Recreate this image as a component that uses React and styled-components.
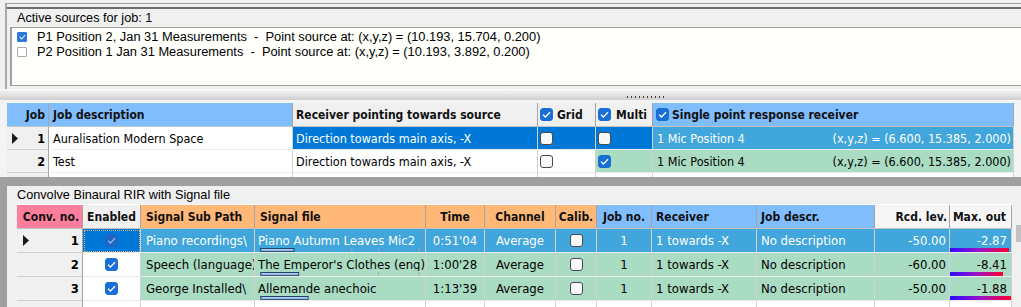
import React from "react";
import styled, { createGlobalStyle, css } from "styled-components";

const GRID_FONT = `"DejaVu Sans Condensed", "Liberation Sans", Arial, sans-serif`;
const UI_FONT = `"Liberation Sans", Arial, sans-serif`;

const C = {
  face: "#f0f0f0",
  sel: "#0078d7",
  selLight: "#41a6db",
  green: "#aadcc3",
  hdrBlue: "#80bdfd",
  hdrOrange: "#ffb877",
  hdrPink: "#fc7e9c",
  hdrWhite: "#f6f6f6",
  white: "#ffffff",
};

const GlobalStyle = createGlobalStyle`
  *, *::before, *::after { box-sizing: border-box; }
  html, body { margin: 0; padding: 0; }
  body { background: #f0f0f0; font-family: ${UI_FONT}; overflow: hidden; }
`;

const Page = styled.div`
  width: 1021px;
  height: 307px;
  overflow: hidden;
  background: #f0f0f0;
  display: flex;
  flex-direction: column;
`;

/* ---------- Active sources ---------- */
const SourcesFrame = styled.div`
  flex: none;
  margin: 3px 0 0 5px;
  height: 86px;
  border-top: 1px solid #a0a0a0;
  border-left: 2px solid #a9a9a9;
  padding-top: 3px;
`;

const SourcesGroup = styled.div`
  height: 100%;
  border-top: 2px solid #6d6d6d;
  display: flex;
  flex-direction: column;
`;

const GroupTitle = styled.div`
  height: 18px;
  line-height: 18px;
  padding-left: 10px;
  font-size: 12.7px;
  color: #000;
`;

const SourceList = styled.div`
  margin-left: 3px;
  height: 59px;
  background: #fffffb;
  border-top: 1px solid #a0a0a0;
  border-left: 2px solid #a0a0a0;
  border-bottom: 1px solid #a0a0a0;
  padding: 1px 0 0 5px;
`;

const SourceItem = styled.div`
  height: 15px;
  display: flex;
  align-items: center;
  gap: 10px;
  font-size: 12.85px;
  white-space: pre;
  color: #000;
`;

const SmallBox = styled.span`
  width: 10px;
  height: 10px;
  flex: none;
  display: inline-flex;
  align-items: center;
  justify-content: center;
  border-radius: 1px;
  border: 1px solid ${(p) => (p.$checked ? "#2b79d8" : "#ababab")};
  background: ${(p) => (p.$checked ? "#2b79d8" : "#fff")};
`;

/* ---------- Splitter ---------- */
const Splitter = styled.div`
  flex: none;
  height: 11px;
  border-top: 1px solid #fbfbfb;
  background: linear-gradient(#f4f4f4, #cfcfcf);
  padding: 6px 0 0 627px;
`;

const Grip = styled.div`
  width: 37px;
  height: 2px;
  background: repeating-linear-gradient(90deg, #3a3a3a 0 1px, transparent 1px 4px);
`;

/* ---------- Grids ---------- */
const JobArea = styled.div`
  flex: none;
  height: 77px;
  padding: 3px 0 0 7px;
  overflow: hidden;
  background: #f4f4f4;
`;

const Workspace = styled.div`
  flex: 1;
  min-height: 0;
  background: #a0a0a0;
  padding: 9px 0 0 7px;
  display: flex;
`;

const ConvolvePanel = styled.div`
  flex: 1;
  background: #f0f0f0;
  display: flex;
  flex-direction: column;
  overflow: hidden;
`;

const PanelLabel = styled.div`
  height: 18px;
  line-height: 18px;
  padding-left: 10px;
  font-size: 12.7px;
  color: #000;
`;

const GridRow = styled.div`
  display: flex;
  padding-left: 10px;
  align-items: flex-start;
`;

const ScrollTrack = styled.div`
  flex: 1;
  align-self: stretch;
  padding: 21px 0 0 4px;
  background: #f0f0f0;
`;

const ScrollThumb = styled.div`
  width: 10px;
  height: 17px;
  background: #c2c2c2;
`;

const Grid = styled.div`
  flex: none;
  display: grid;
  grid-template-columns: ${(p) => p.$cols.map((w) => `${w}px`).join(" ")};
  grid-template-rows: ${(p) => p.$head}px;
  grid-auto-rows: ${(p) => p.$row}px;
  font-family: ${GRID_FONT};
  font-size: ${(p) => p.$size}px;
  ${(p) => p.$topLine && css`border-top: 1px solid #ffffff;`}
`;

const JUSTIFY = { left: "flex-start", center: "center", right: "flex-end", between: "space-between" };

const CellBase = styled.div`
  display: flex;
  align-items: center;
  justify-content: ${(p) => JUSTIFY[p.$align || "left"]};
  gap: ${(p) => p.$gap ?? 0}px;
  padding: 0 ${(p) => p.$pr ?? 4}px 0 ${(p) => p.$pl ?? 4}px;
  min-width: 0;
  overflow: hidden;
  white-space: nowrap;
  background: ${(p) => p.$bg || "#fff"};
  color: ${(p) => p.$fg || "#000"};
`;

const HeadCell = styled(CellBase)`
  font-weight: bold;
  font-size: 12px;
  color: #111;
  border-right: 1px solid #a4a4a4;
  border-bottom: 1px solid #c4c4c4;
`;

const BodyCell = styled(CellBase)`
  border-right: 1px solid #d2d2d2;
  border-bottom: 1px solid #ececec;
  ${(p) =>
    p.$focus &&
    css`
      outline: 1px dotted #e0b06a;
      outline-offset: -2px;
    `}
`;

const FixedCell = styled(CellBase)`
  background: #f0f0f0;
  font-weight: bold;
  justify-content: space-between;
  border-right: 1px solid #a4a4a4;
  border-bottom: 1px solid #cfcfcf;
`;

const StackCell = styled(BodyCell)`
  flex-direction: column;
  align-items: stretch;
  justify-content: flex-start;
  padding: 4px 0 0 0;
`;

const StackText = styled.span`
  display: block;
  height: 15px;
  line-height: 15px;
  padding: 0 ${(p) => p.$pr ?? 4}px 0 ${(p) => p.$pl ?? 4}px;
  text-align: ${(p) => p.$align || "left"};
  overflow: hidden;
`;

const LevelBar = styled.div`
  height: 4px;
  background: linear-gradient(90deg, #2d0cff, #9a12c8 50%, #ff0030);
`;

const BarSvg = styled.svg`
  display: block;
  margin-top: 1px;
`;

const CheckBox = styled.span`
  width: 13px;
  height: 13px;
  flex: none;
  border-radius: 3px;
  display: inline-flex;
  align-items: center;
  justify-content: center;
  ${(p) => p.$state === "on" && css`background: #1a6fd6; border: 1px solid #1a6fd6;`}
  ${(p) => p.$state === "dim" && css`background: #1d66c4; border: 1px solid #1d66c4;`}
  ${(p) => p.$state === "off" && css`background: #f9f9f9; border: 1px solid #4a4a4a;`}
`;

function Check({ state }) {
  return (
    <CheckBox $state={state}>
      {state !== "off" && (
        <svg width="9" height="7" viewBox="0 0 9 7">
          <path
            d="M1 3.6 L3.4 6 L8 1.2"
            fill="none"
            stroke={state === "dim" ? "#8db6ea" : "#ffffff"}
            strokeWidth="1.3"
          />
        </svg>
      )}
    </CheckBox>
  );
}

function SmallCheck({ checked }) {
  return (
    <SmallBox $checked={checked}>
      {checked && (
        <svg width="7" height="6" viewBox="0 0 7 6">
          <path d="M0.8 3 L2.7 4.9 L6.2 1" fill="none" stroke="#d8e8fb" strokeWidth="1.1" />
        </svg>
      )}
    </SmallBox>
  );
}

function Indicator() {
  return (
    <svg width="6" height="11" viewBox="0 0 6 11">
      <polygon points="0,0 6,5.5 0,11" fill="#1a1a1a" />
    </svg>
  );
}

function MiniBar({ width, ticks }) {
  return (
    <BarSvg width="170" height="4" viewBox="0 0 170 4">
      <rect x="1.5" y="0.5" width={width} height="3" fill="#a8ccf2" stroke="#1e3a66" strokeWidth="1" />
      {ticks.map((t) => (
        <line key={t} x1={t + 0.5} x2={t + 0.5} y1="0" y2="4" stroke="#a8a8a8" strokeWidth="1" />
      ))}
    </BarSvg>
  );
}

/* ---------- Data ---------- */
const SOURCES = [
  { checked: true, label: "P1 Position 2, Jan 31 Measurements  -  Point source at: (x,y,z) = (10.193, 15.704, 0.200)" },
  { checked: false, label: "P2 Position 1 Jan 31 Measurements  -  Point source at: (x,y,z) = (10.193, 3.892, 0.200)" },
];

const JOB_COLS = [42, 244, 245, 58, 57, 361];

const JOBS = [
  {
    no: 1,
    selected: true,
    desc: "Auralisation Modern Space",
    receiver: "Direction towards main axis, -X",
    grid: false,
    multi: false,
    mic: "1 Mic Position 4",
    xyz: "(x,y,z) = (6.600, 15.385, 2.000)",
  },
  {
    no: 2,
    selected: false,
    desc: "Test",
    receiver: "Direction towards main axis, -X",
    grid: false,
    multi: true,
    mic: "1 Mic Position 4",
    xyz: "(x,y,z) = (6.600, 15.385, 2.000)",
  },
];

const CONV_COLS = [66, 58, 114, 171, 59, 71, 41, 55, 105, 118, 75, 62];

const CONV_HEAD = [
  { label: "Conv. no.", bg: C.hdrPink, align: "right", pr: 3 },
  { label: "Enabled", bg: C.face, align: "center" },
  { label: "Signal Sub Path", bg: C.hdrOrange, pl: 5 },
  { label: "Signal file", bg: C.hdrOrange, pl: 5 },
  { label: "Time", bg: C.hdrOrange, align: "center" },
  { label: "Channel", bg: C.hdrOrange, align: "center" },
  { label: "Calib.", bg: C.hdrOrange, align: "center", pl: 2, pr: 2 },
  { label: "Job no.", bg: C.hdrBlue, align: "center" },
  { label: "Receiver", bg: C.hdrBlue },
  { label: "Job descr.", bg: C.hdrBlue },
  { label: "Rcd. lev.", bg: C.hdrWhite, align: "right", pr: 2 },
  { label: "Max. out", bg: C.hdrWhite, align: "right", pr: 5 },
];

const CONVS = [
  {
    no: 1,
    selected: true,
    sub: "Piano recordings\\",
    file: "Piano Autumn Leaves Mic2",
    fileBar: 35,
    ticks: [97, 125, 168],
    time: "0:51'04",
    rcd: "-50.00",
    max: "-2.87",
    maxBar: 59,
  },
  {
    no: 2,
    selected: false,
    sub: "Speech (language)\\",
    file: "The Emperor's Clothes (eng)",
    fileBar: 40,
    ticks: [125, 168],
    time: "1:00'28",
    rcd: "-60.00",
    max: "-8.41",
    maxBar: 53,
  },
  {
    no: 3,
    selected: false,
    sub: "George Installed\\",
    file: "Allemande anechoic",
    fileBar: 50,
    ticks: [],
    time: "1:13'39",
    rcd: "-50.00",
    max: "-1.88",
    maxBar: 61,
  },
];

/* ---------- Pieces ---------- */
function JobGrid() {
  return (
    <Grid $cols={JOB_COLS} $head={24} $row={23} $size={12.5}>
      <HeadCell $bg={C.hdrBlue} $align="right" $pr={3}>Job</HeadCell>
      <HeadCell $bg={C.hdrBlue}>Job description</HeadCell>
      <HeadCell $bg={C.face} $pl={3}>Receiver pointing towards source</HeadCell>
      <HeadCell $bg={C.face} $pl={2} $gap={4}>
        <Check state="on" />
        Grid
      </HeadCell>
      <HeadCell $bg={C.face} $pl={2} $gap={5}>
        <Check state="on" />
        Multi
      </HeadCell>
      <HeadCell $bg={C.hdrBlue} $pl={3} $gap={3}>
        <Check state="on" />
        Single point response receiver
      </HeadCell>

      {JOBS.map((j) => {
        const rowBg = j.selected ? C.sel : C.white;
        const rowFg = j.selected ? "#fff" : "#000";
        const green = j.selected ? C.selLight : C.green;
        return (
          <React.Fragment key={j.no}>
            <FixedCell $pl={5} $pr={3}>
              {j.selected ? <Indicator /> : <span />}
              <span>{j.no}</span>
            </FixedCell>
            <BodyCell $bg={C.white}>{j.desc}</BodyCell>
            <BodyCell $bg={rowBg} $fg={rowFg} $pl={3}>{j.receiver}</BodyCell>
            <BodyCell $bg={rowBg} $pl={2}>
              <Check state={j.grid ? "on" : "off"} />
            </BodyCell>
            <BodyCell $bg={j.multi ? green : rowBg} $pl={2}>
              <Check state={j.multi ? "on" : "off"} />
            </BodyCell>
            <BodyCell $bg={green} $fg={j.selected ? "#fff" : "#000"} $align="between" $pr={2}>
              <span>{j.mic}</span>
              <span>{j.xyz}</span>
            </BodyCell>
          </React.Fragment>
        );
      })}

      <FixedCell />
      {JOB_COLS.slice(1).map((w, i) => (
        <BodyCell key={i} $bg={C.white} />
      ))}
    </Grid>
  );
}

function ConvGrid() {
  return (
    <Grid $cols={CONV_COLS} $head={24} $row={24} $size={13} $topLine>
      {CONV_HEAD.map((h) => (
        <HeadCell key={h.label} $bg={h.bg} $align={h.align} $pl={h.pl} $pr={h.pr}>
          {h.label}
        </HeadCell>
      ))}

      {CONVS.map((r) => {
        const bg = r.selected ? C.selLight : C.green;
        const fg = r.selected ? "#fff" : "#000";
        return (
          <React.Fragment key={r.no}>
            <FixedCell $pl={6} $pr={3}>
              {r.selected ? <Indicator /> : <span />}
              <span>{r.no}</span>
            </FixedCell>
            <BodyCell $bg={r.selected ? C.sel : C.white} $align="center" $focus={r.selected}>
              <Check state={r.selected ? "dim" : "on"} />
            </BodyCell>
            <BodyCell $bg={bg} $fg={fg} $pl={5} $pr={0}>{r.sub}</BodyCell>
            <StackCell $bg={bg} $fg={fg}>
              <StackText $pl={3} $pr={0}>{r.file}</StackText>
              <MiniBar width={r.fileBar} ticks={r.ticks} />
            </StackCell>
            <BodyCell $bg={bg} $fg={fg} $align="center">{r.time}</BodyCell>
            <BodyCell $bg={bg} $fg={fg} $align="center">Average</BodyCell>
            <BodyCell $bg={bg} $align="center" $pl={0} $pr={0}>
              <Check state="off" />
            </BodyCell>
            <BodyCell $bg={bg} $fg={fg} $align="center">1</BodyCell>
            <BodyCell $bg={bg} $fg={fg}>1 towards -X</BodyCell>
            <BodyCell $bg={bg} $fg={fg}>No description</BodyCell>
            <BodyCell $bg={bg} $fg={fg} $align="right" $pr={3}>{r.rcd}</BodyCell>
            <StackCell $bg={bg} $fg={fg}>
              <StackText $align="right" $pr={4}>{r.max}</StackText>
              <LevelBar style={{ width: `${r.maxBar}px` }} />
            </StackCell>
          </React.Fragment>
        );
      })}

      <FixedCell />
      {CONV_COLS.slice(1).map((w, i) => (
        <BodyCell key={i} $bg={C.white} />
      ))}
    </Grid>
  );
}

export default function App() {
  return (
    <>
      <GlobalStyle />
      <Page>
        <SourcesFrame>
          <SourcesGroup>
            <GroupTitle>Active sources for job: 1</GroupTitle>
            <SourceList>
              {SOURCES.map((s) => (
                <SourceItem key={s.label}>
                  <SmallCheck checked={s.checked} />
                  <span>{s.label}</span>
                </SourceItem>
              ))}
            </SourceList>
          </SourcesGroup>
        </SourcesFrame>

        <Splitter>
          <Grip />
        </Splitter>

        <JobArea>
          <JobGrid />
        </JobArea>

        <Workspace>
          <ConvolvePanel>
            <PanelLabel>Convolve Binaural RIR with Signal file</PanelLabel>
            <GridRow>
              <ConvGrid />
              <ScrollTrack>
                <ScrollThumb />
              </ScrollTrack>
            </GridRow>
          </ConvolvePanel>
        </Workspace>
      </Page>
    </>
  );
}
